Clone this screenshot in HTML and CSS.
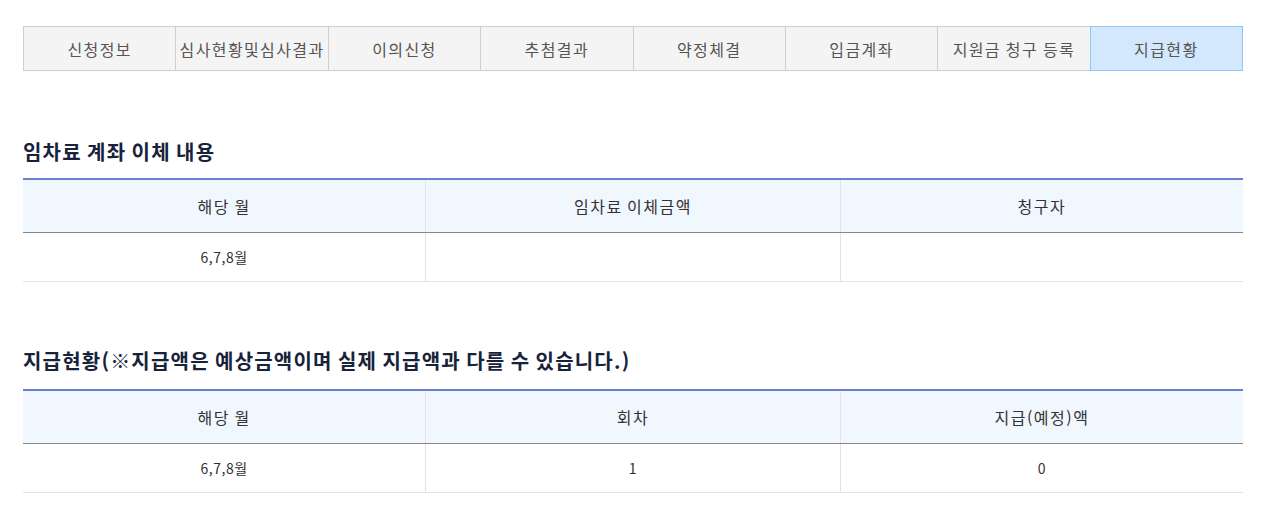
FILE: index.html
```html
<!DOCTYPE html>
<html lang="ko">
<head>
<meta charset="utf-8">
<title>지급현황</title>
<link rel="stylesheet" href="styles.css">
</head>
<body>
<div class="page">
  <ul class="tabs">
    <li class="tab">신청정보</li>
    <li class="tab">심사현황및심사결과</li>
    <li class="tab">이의신청</li>
    <li class="tab">추첨결과</li>
    <li class="tab">약정체결</li>
    <li class="tab">입금계좌</li>
    <li class="tab">지원금 청구 등록</li>
    <li class="tab active">지급현황</li>
  </ul>

  <section class="section first">
    <h2 class="title">임차료 계좌 이체 내용</h2>
    <table class="grid">
      <colgroup><col class="c1"><col class="c2"><col class="c3"></colgroup>
      <thead>
        <tr><th>해당 월</th><th>임차료 이체금액</th><th>청구자</th></tr>
      </thead>
      <tbody>
        <tr><td>6,7,8월</td><td></td><td></td></tr>
      </tbody>
    </table>
  </section>

  <section class="section second">
    <h2 class="title">지급현황(※지급액은 예상금액이며 실제 지급액과 다를 수 있습니다.)</h2>
    <table class="grid">
      <colgroup><col class="c1"><col class="c2"><col class="c3"></colgroup>
      <thead>
        <tr><th>해당 월</th><th>회차</th><th>지급(예정)액</th></tr>
      </thead>
      <tbody>
        <tr><td>6,7,8월</td><td>1</td><td>0</td></tr>
      </tbody>
    </table>
  </section>
</div>
</body>
</html>
```

FILE: styles.css
```css
html, body {
  margin: 0;
  padding: 0;
  background: #fff;
}
body {
  font-family: "Noto Sans CJK KR", "Noto Sans", sans-serif;
  color: #333;
}
.page {
  width: 1220px;
  padding: 26px 0 0 23px;
}
.tabs {
  list-style: none;
  margin: 0;
  padding: 0;
  display: flex;
}
.tab {
  flex: 1 1 0;
  height: 43px;
  display: flex;
  align-items: center;
  justify-content: center;
  border: 1px solid #cfcfcf;
  margin-left: -1px;
  background: #f4f4f4;
  color: #555;
  font-size: 16px;
  letter-spacing: 1.4px;
  word-spacing: -1px;
  white-space: nowrap;
}
.tab:first-child {
  margin-left: 0;
}
.tab.active {
  background: #d3e8fc;
  border-color: #8ec8f7;
  position: relative;
}
.section.first {
  margin-top: 66px;
}
.section.second {
  margin-top: 64px;
}
.title {
  margin: 0 0 11px;
  font-size: 20px;
  line-height: 30px;
  font-weight: 700;
  letter-spacing: 1.2px;
  word-spacing: -1.5px;
  color: #17233b;
}
.section.second .title {
  margin-bottom: 13px;
}
.grid {
  width: 100%;
  border-collapse: collapse;
  table-layout: fixed;
  border-top: 2px solid #6b80d2;
}
.c1 { width: 33%; }
.c2 { width: 34%; }
.c3 { width: 33%; }
.grid th {
  height: 52px;
  padding: 0;
  background: #f1f7fe;
  font-weight: 400;
  font-size: 16px;
  letter-spacing: 1.5px;
  word-spacing: -1.5px;
  color: #333;
  border-bottom: 1px solid #888;
  border-left: 1px solid #e3e3e3;
}
.grid td {
  height: 48px;
  padding: 0;
  text-align: center;
  font-size: 14px;
  letter-spacing: 0.5px;
  color: #333;
  border-bottom: 1px solid #e3e3e3;
  border-left: 1px solid #e3e3e3;
}
.grid th:first-child,
.grid td:first-child {
  border-left: none;
}
```
